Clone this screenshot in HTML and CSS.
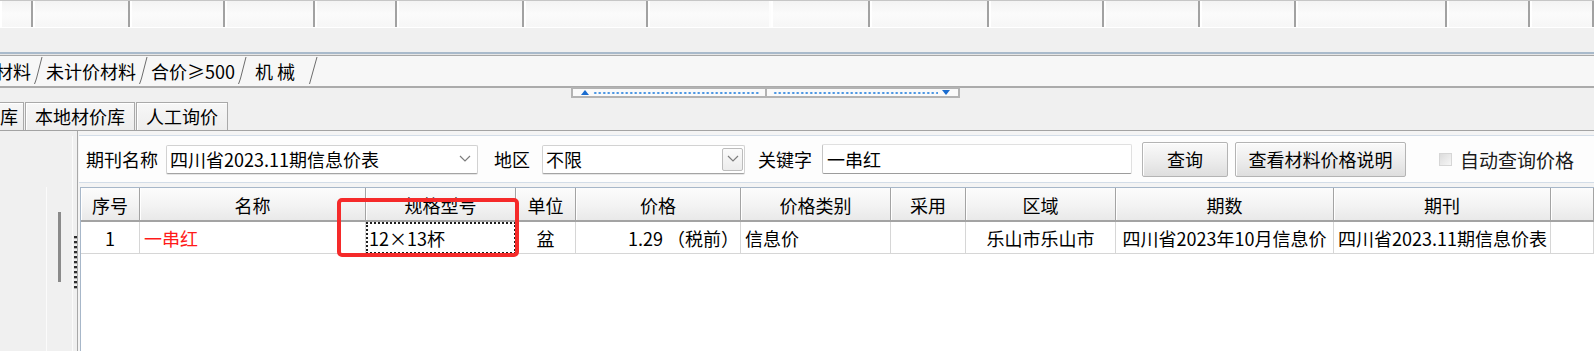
FILE: index.html
```html
<!DOCTYPE html>
<html lang="zh-CN">
<head>
    <meta charset="UTF-8">
    <title>材料价格查询</title>
    <link rel="stylesheet" href="styles.css">
</head>
<body>
    <div class="screen">
        <div class="top-grid">
            <span class="tg-cell"></span><span class="tg-cell"></span><span class="tg-cell"></span><span class="tg-cell"></span>
            <span class="tg-cell"></span><span class="tg-cell"></span><span class="tg-cell"></span><span class="tg-cell light"></span>
            <span class="tg-cell"></span><span class="tg-cell"></span><span class="tg-cell"></span><span class="tg-cell"></span>
            <span class="tg-cell"></span><span class="tg-cell"></span><span class="tg-cell"></span><span class="tg-cell"></span>
        </div>

        <div class="spacer"></div>

        <!-- sheet tabs -->
        <div class="sheet-tabs">
            <span class="sheet-tab first">材料</span>
            <svg class="tab-sep" viewBox="0 0 10 30"><path d="M1.5 28 C2.5 26 2.8 24 3.6 22 L9 1"/></svg>
            <span class="sheet-tab">未计价材料</span>
            <svg class="tab-sep" viewBox="0 0 10 30"><path d="M1.5 28 C2.5 26 2.8 24 3.6 22 L9 1"/></svg>
            <span class="sheet-tab">合价≥500</span>
            <svg class="tab-sep" viewBox="0 0 10 30"><path d="M1.5 28 C2.5 26 2.8 24 3.6 22 L9 1"/></svg>
            <span class="sheet-tab wide">机 械</span>
            <svg class="tab-sep last" viewBox="0 0 10 30"><path d="M1.5 28 L9 1"/></svg>
        </div>

        <div class="grip-row">
            <div class="grip">
                <span class="grip-half"><i class="arrow-up"></i><i class="dots"></i></span>
                <span class="grip-half"><i class="dots"></i><i class="arrow-down"></i></span>
            </div>
        </div>

        <div class="lib-tabs">
            <span class="lib-tab first">库</span>
            <span class="lib-tab">本地材价库</span>
            <span class="lib-tab">人工询价</span>
        </div>

        <div class="work">
            <aside class="side">
                <div class="side-nav"></div>
                <div class="side-scroll"><span class="side-bar"></span></div>
                <div class="side-grip"><span class="grip-dots"></span></div>
            </aside>

            <section class="main-pane">
                <div class="toolbar">
                    <span class="tb-label">期刊名称</span>
                    <div class="combo combo-issue">
                        <span class="combo-text">四川省2023.11期信息价表</span>
                        <svg class="chev" viewBox="0 0 12 8"><polyline points="1,1 6,6 11,1"/></svg>
                    </div>
                    <span class="tb-label area-label">地区</span>
                    <div class="combo combo-area">
                        <span class="combo-text">不限</span>
                        <span class="combo-btn"><svg class="chev" viewBox="0 0 12 8"><polyline points="1,1 6,6 11,1"/></svg></span>
                    </div>
                    <span class="tb-label key-label">关键字</span>
                    <div class="text-input">一串红</div>
                    <button class="btn btn-query">查询</button>
                    <button class="btn btn-help">查看材料价格说明</button>
                    <span class="check"></span>
                    <span class="check-label">自动查询价格</span>
                </div>

                <div class="grid">
                    <div class="grid-row head">
                        <span class="cell">序号</span>
                        <span class="cell">名称</span>
                        <span class="cell">规格型号</span>
                        <span class="cell">单位</span>
                        <span class="cell">价格</span>
                        <span class="cell">价格类别</span>
                        <span class="cell">采用</span>
                        <span class="cell">区域</span>
                        <span class="cell">期数</span>
                        <span class="cell">期刊</span>
                        <span class="cell"></span>
                    </div>
                    <div class="grid-row data">
                        <span class="cell">1</span>
                        <span class="cell left red">一串红</span>
                        <span class="cell left focus">12×13杯</span>
                        <span class="cell">盆</span>
                        <span class="cell right">1.29 （税前）</span>
                        <span class="cell left">信息价</span>
                        <span class="cell"></span>
                        <span class="cell">乐山市乐山市</span>
                        <span class="cell">四川省2023年10月信息价</span>
                        <span class="cell left">四川省2023.11期信息价表</span>
                        <span class="cell"></span>
                    </div>
                </div>
            </section>
        </div>

        <div class="callout"></div>
    </div>
</body>
</html>
```

FILE: styles.css
```css
* {
  box-sizing: border-box;
  margin: 0;
  padding: 0;
}

body {
  font-family: "Noto Sans CJK SC", "Noto Sans", sans-serif;
  font-size: 18px;
  color: #000;
  background: #f0f0f0;
  overflow: hidden;
}

.screen {
  position: relative;
  width: 1594px;
  height: 351px;
  display: flex;
  flex-direction: column;
  overflow: hidden;
}

/* top header strip */
.top-grid {
  display: grid;
  grid-template-columns: 33px 97px 95px 90px 82px 127px 124px 123px 99px 119px 115px 96px 96px 151px 83px 64px;
  height: 28px;
  border-top: 1px solid #c6c6c6;
  border-bottom: 1px solid #fff;
  flex: none;
}

.tg-cell {
  background: linear-gradient(#f3f3f3, #fbfbfb 50%, #f6f6f6);
  border-right: 2px solid #a2a2a2;
  box-shadow: inset 2px 0 0 #fff;
}

.tg-cell.light {
  border-right-color: #fdfdfd;
}

.spacer {
  height: 24px;
  flex: none;
}

/* sheet tabs */
.sheet-tabs {
  flex: none;
  height: 36px;
  display: flex;
  align-items: center;
  border-top: 2px solid #a9bacb;
  box-shadow: inset 0 1px 0 #e6e6e6, inset 0 2px 0 #a8a8a8;
  border-bottom: 2px solid #ababab;
  background: #f7f7f7;
  padding-top: 2px;
  line-height: 1;
}

.sheet-tab {
  white-space: nowrap;
  padding: 0 1px;
}

.sheet-tab.first {
  margin-left: -6px;
}

.sheet-tab.wide {
  padding-left: 6px;
  width: 51px;
}

.tab-sep {
  width: 10px;
  height: 30px;
  margin: 0 2px 0 1px;
  fill: none;
  stroke: #6d6d6d;
  stroke-width: 1;
}

.tab-sep.last {
  margin-left: 8px;
}

/* splitter grip */
.grip-row {
  flex: none;
  height: 10px;
  padding-left: 571px;
}

.grip {
  width: 389px;
  height: 11px;
  margin-top: -1px;
  display: flex;
  border: 2px solid #b3b3b3;
  background: #fafafa;
}

.grip-half {
  display: flex;
  align-items: center;
  gap: 4px;
  padding: 0 6px;
}

.grip-half:first-child {
  width: 194px;
  border-right: 2px solid #b3b3b3;
}

.grip-half:last-child {
  flex: 1;
}

.dots {
  flex: 1;
  height: 4px;
  background: radial-gradient(circle, #3c8de0 0.9px, transparent 1.3px) 0 0 / 4.5px 4px repeat-x;
}

.arrow-up {
  width: 0;
  height: 0;
  border-left: 4px solid transparent;
  border-right: 4px solid transparent;
  border-bottom: 5px solid #1a6ccf;
  margin-left: 2px;
}

.arrow-down {
  width: 0;
  height: 0;
  border-left: 4px solid transparent;
  border-right: 4px solid transparent;
  border-top: 5px solid #1a6ccf;
  margin-right: 2px;
}

/* library tabs */
.lib-tabs {
  flex: none;
  display: flex;
  align-items: flex-end;
  height: 33px;
  padding-top: 5px;
  border-bottom: 1px solid #a3a3a3;
}

.lib-tab {
  height: 28px;
  line-height: 26px;
  padding: 0 9px;
  border: 1px solid #a9a9a9;
  border-bottom: none;
  margin-right: 1px;
  background: linear-gradient(#f7f7f7, #ededed);
  box-shadow: inset 1px 1px 0 #fff;
}

.lib-tab.first {
  margin-left: -9px;
  padding-left: 8px;
  padding-right: 5px;
}

/* work area */
.work {
  flex: 1;
  display: flex;
  min-height: 0;
}

.side {
  width: 77px;
  flex: none;
  display: flex;
  background: #f0f0f0;
}

.side-nav {
  width: 47px;
  margin-top: 56px;
  border-right: 1px solid #fbfbfb;
}

.side-scroll {
  width: 26px;
  margin-top: 5px;
  padding-top: 76px;
  padding-left: 11px;
  border-right: 1px solid #fbfbfb;
}

.side-bar {
  display: block;
  width: 3px;
  height: 70px;
  background: #8a8a8a;
}

.side-grip {
  width: 4px;
  padding-top: 105px;
}

.grip-dots {
  display: block;
  width: 3px;
  height: 53px;
  margin-left: 1px;
  background: repeating-linear-gradient(#2e2e2e 0 2px, #b0b0b0 2px 3px, transparent 3px 5px);
}

.main-pane {
  flex: 1;
  display: flex;
  flex-direction: column;
  border-left: 1px solid #a8a8a8;
  background: #f4f4f4;
  padding-top: 4px;
  min-width: 0;
}

/* toolbar */
.toolbar {
  flex: none;
  height: 48px;
  margin-left: 1px;
  display: flex;
  align-items: center;
  padding-left: 7px;
  background: #fdfdfd;
  border-top: 1px solid #d3dde8;
  border-bottom: 1px solid #d3dde8;
  white-space: nowrap;
  line-height: 1;
}

.tb-label {
  flex: none;
}

.combo {
  flex: none;
  height: 29px;
  display: flex;
  align-items: center;
  background: #fff;
  border: 1px solid #d2d2d2;
  border-bottom-color: #a4a4a4;
  border-radius: 2px;
  box-shadow: 0 1px 0 #e6e6e6;
}

.combo-text {
  flex: 1;
  padding-left: 3px;
}

.combo-issue {
  width: 312px;
  margin-left: 8px;
  padding-right: 6px;
}

.chev {
  width: 12px;
  height: 8px;
  fill: none;
  stroke: #7d7d7d;
  stroke-width: 1.2;
}

.area-label {
  margin-left: 16px;
}

.combo-area {
  width: 203px;
  margin-left: 12px;
  padding-right: 1px;
}

.combo-btn {
  width: 21px;
  height: 23px;
  display: flex;
  align-items: center;
  justify-content: center;
  border: 1px solid #bcbcbc;
  border-radius: 2px;
  background: linear-gradient(#fbfbfb, #ececec);
}

.key-label {
  margin-left: 13px;
}

.text-input {
  flex: none;
  width: 310px;
  height: 30px;
  margin-left: 10px;
  padding-left: 4px;
  display: flex;
  align-items: center;
  background: #fff;
  border: 1px solid #e0e0e0;
  border-left-color: #c4c4c4;
  border-bottom-color: #9c9c9c;
  border-radius: 2px;
}

.btn {
  flex: none;
  height: 35px;
  font: inherit;
  line-height: 1;
  color: #000;
  background: linear-gradient(#fafafa, #ececec 55%, #dedede);
  border: 1px solid #b4b4b4;
  border-radius: 2px;
  box-shadow: inset 1px 1px 0 #fff;
}

.btn-query {
  width: 86px;
  margin-left: 10px;
}

.btn-help {
  width: 171px;
  margin-left: 7px;
}

.check {
  flex: none;
  width: 13px;
  height: 13px;
  margin-left: 33px;
  margin-top: 1px;
  border: 1px solid #d6d6d6;
  background: linear-gradient(135deg, #dcdcdc, #f6f6f6);
}

.check-label {
  margin-left: 8px;
  font-size: 19px;
  color: #1a1a1a;
}

/* result grid */
.grid {
  flex: 1;
  margin-top: 4px;
  margin-left: 2px;
  background: #fff;
  border-top: 1px solid #a7b7c9;
  border-left: 1px solid #a7b7c9;
  line-height: 1;
}

.grid-row {
  display: grid;
  grid-template-columns: 59px 226px 150px 60px 165px 150px 75px 150px 218px 217px 1fr;
}

.cell {
  display: flex;
  align-items: center;
  justify-content: center;
  white-space: nowrap;
  overflow: hidden;
}

.head {
  height: 34px;
}

.head .cell {
  background: linear-gradient(#fcfcfc, #f4f4f4 50%, #e9e9e9);
  border-right: 1px solid #a3a3a3;
  border-bottom: 2px solid #a3a3a3;
  box-shadow: inset 1px 0 0 #fff;
  padding-top: 1px;
}

.data {
  height: 32px;
}

.data .cell {
  border-right: 1px solid #d6d6d6;
  border-bottom: 1px solid #d6d6d6;
  padding-top: 1px;
}

.data .cell.left {
  justify-content: flex-start;
  padding-left: 4px;
}

.data .cell.right {
  justify-content: flex-end;
  padding-right: 1px;
}

.data .cell.red {
  color: #ff1a1a;
}

.data .cell.focus {
  outline: 2px dotted #1e1e1e;
  outline-offset: -2px;
  padding-left: 3px;
}

/* red annotation frame over the spec column */
.callout {
  position: absolute;
  left: 337px;
  top: 198px;
  width: 182px;
  height: 59px;
  border: 4px solid #f52a2a;
  border-radius: 5px;
  pointer-events: none;
}
```
